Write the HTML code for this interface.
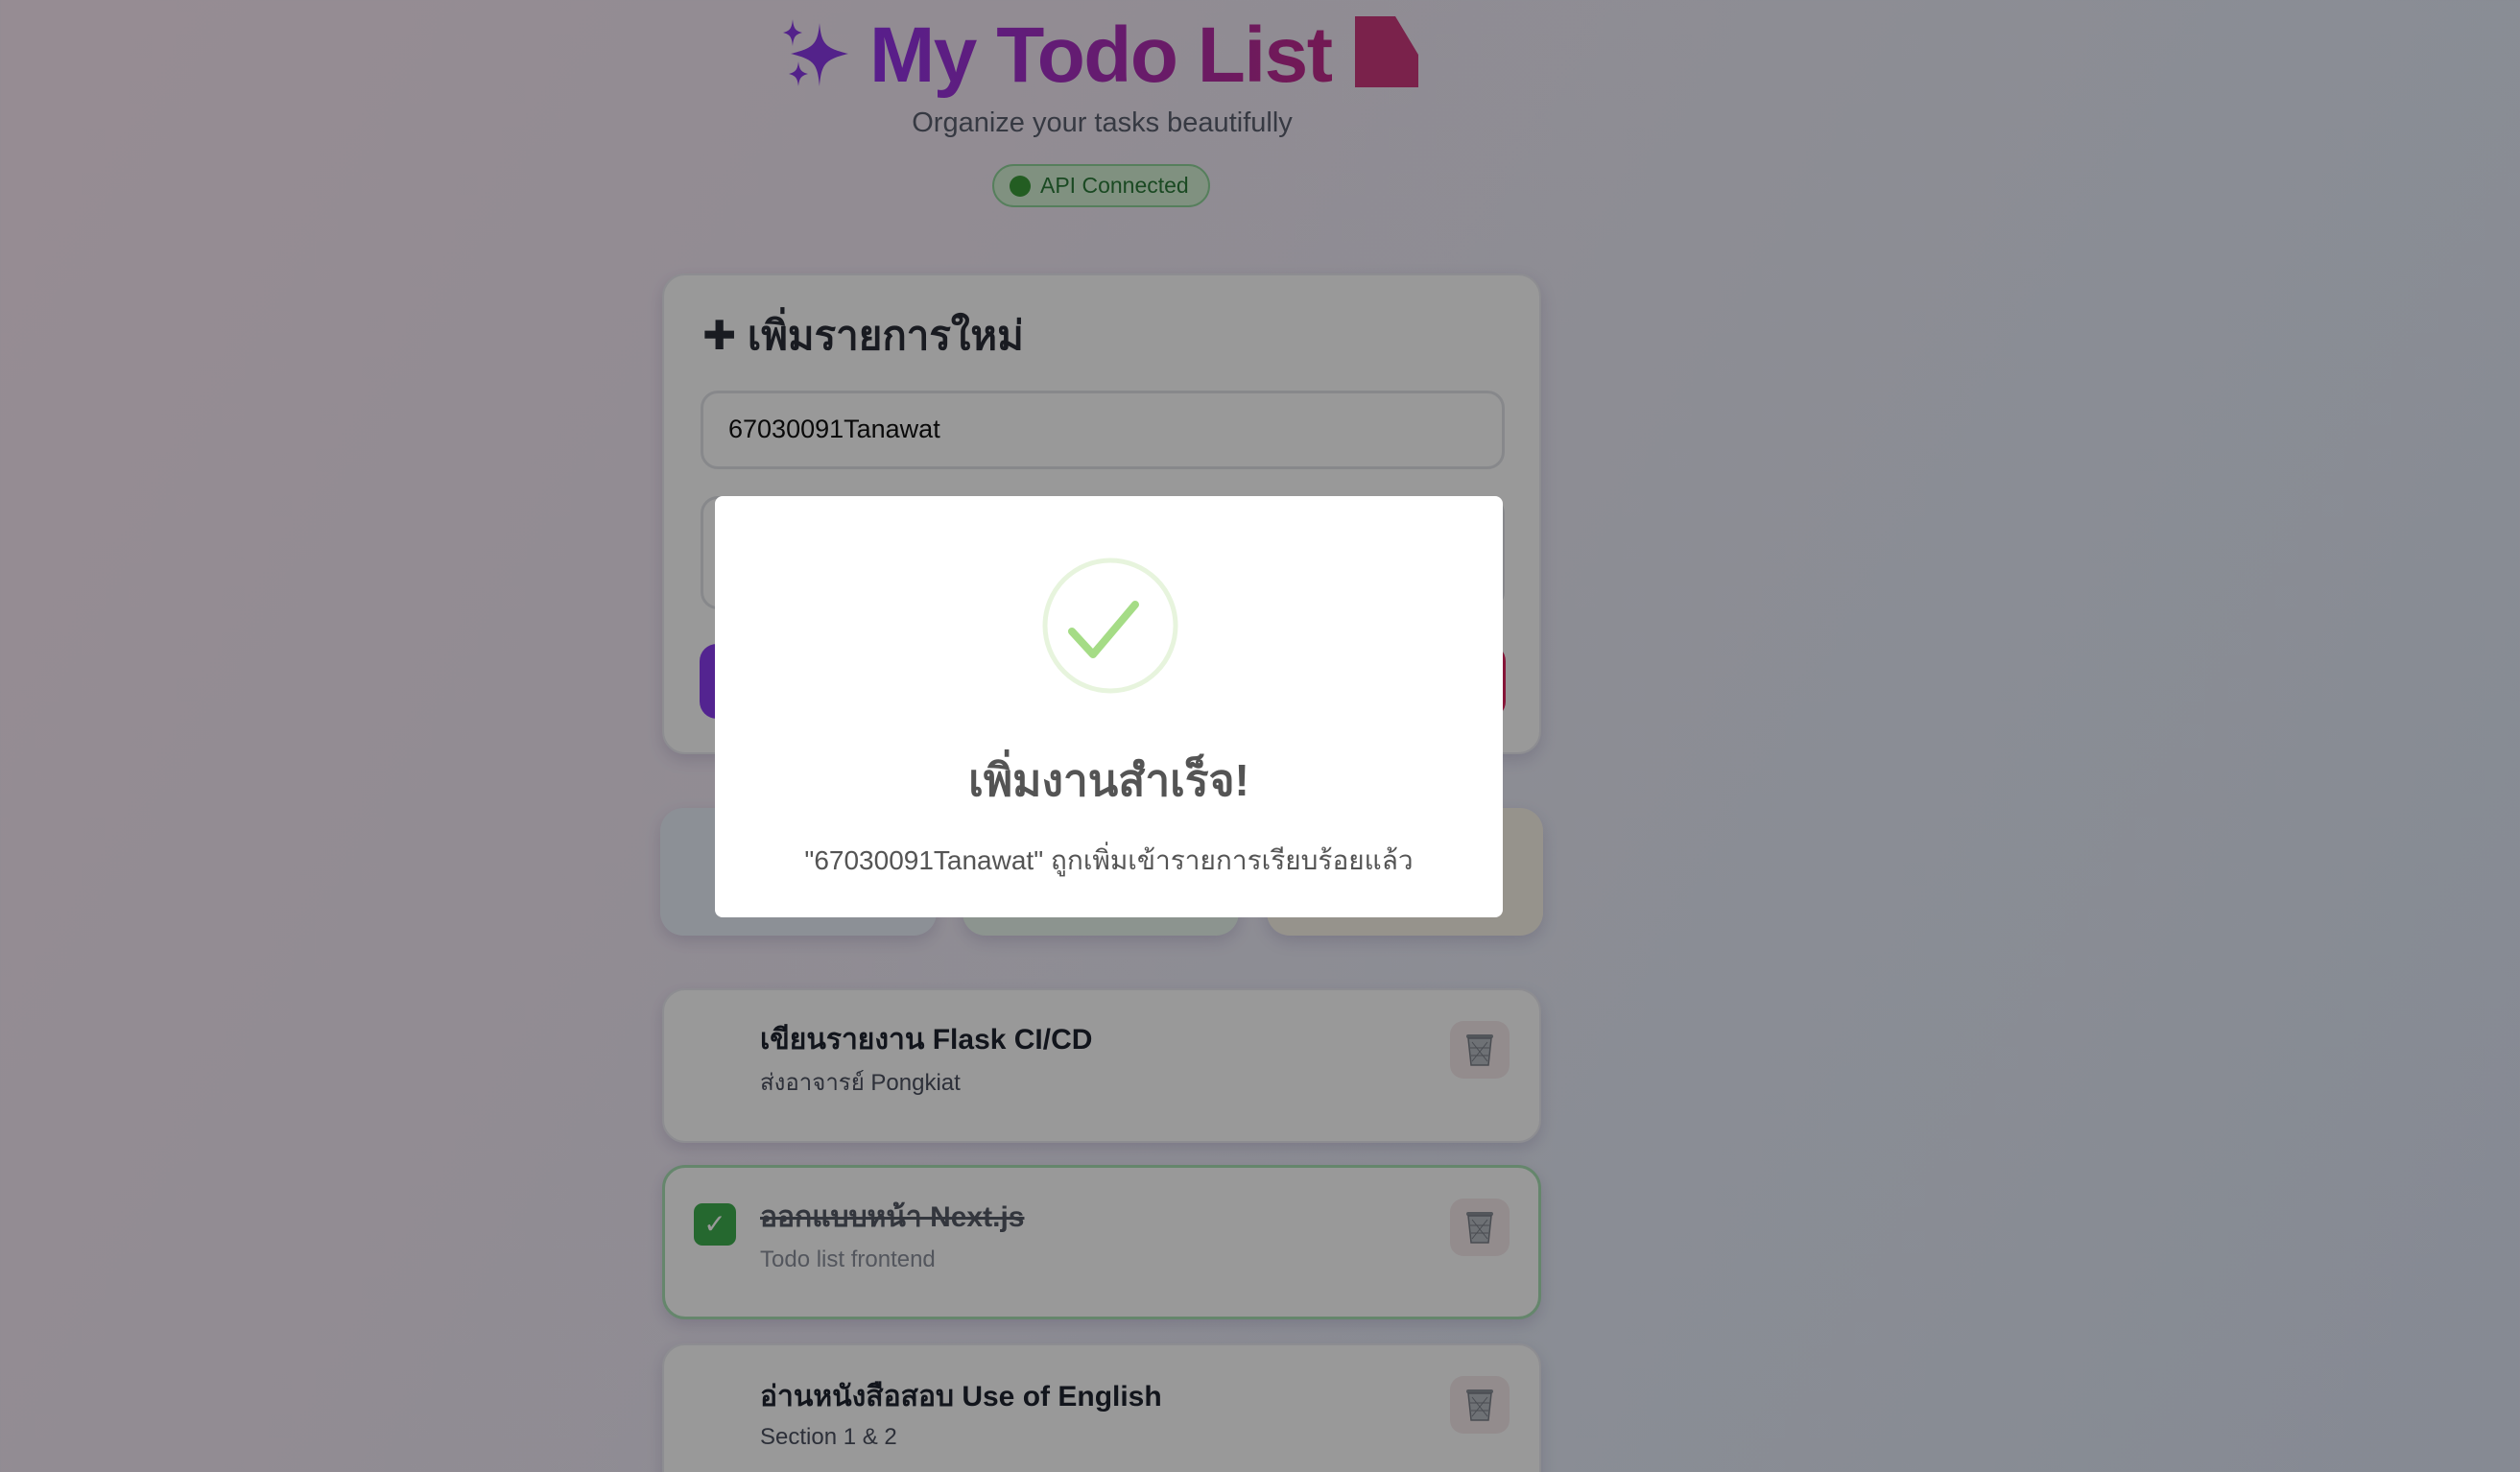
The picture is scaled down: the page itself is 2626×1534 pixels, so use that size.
<!DOCTYPE html>
<html><head><meta charset="utf-8">
<style>
*{box-sizing:border-box;margin:0;padding:0}
html,body{width:2626px;height:1534px;overflow:hidden}
body{position:relative;font-family:"Liberation Sans","DejaVu Sans",sans-serif;background:linear-gradient(120deg,#fbeaf6 0%,#f2eaf6 35%,#e6ecf8 70%,#dfe6f6 100%)}
.abs{position:absolute}
.title{left:906px;top:8px;font-size:82px;font-weight:bold;letter-spacing:-1.5px;background:linear-gradient(90deg,#9333ea,#c02a8a);-webkit-background-clip:text;color:transparent;line-height:100px;white-space:nowrap}
.sub{left:0;width:2297px;text-align:center;top:112px;font-size:29px;color:#5a5f6e}
.badge{left:1034px;top:171px;width:227px;height:45px;border-radius:23px;background:#d6f2d6;border:2px solid #8fd49a;color:#2c7a3a;font-size:23px;line-height:41px;padding-left:48px}
.badge:before{content:"";position:absolute;left:16px;top:10px;width:22px;height:22px;border-radius:50%;background:#3b9b3a}
.card{background:#ffffff;border-radius:24px;box-shadow:0 6px 16px rgba(80,60,120,.18)}
.overlay{left:0;top:0;width:2626px;height:1534px;background:rgba(0,0,0,.4)}
.modal{left:745px;top:517px;width:821px;height:439px;background:#fff;border-radius:8px}
.trash{width:62px;height:60px;border-radius:14px;background:#f6eaec}
.trash svg{position:absolute;left:16px;top:12px}
.ti{font-size:30px;font-weight:bold;color:#1f2330}
.ts{font-size:24px;color:#4b5060}
</style></head><body>
<svg class="abs" style="left:814px;top:18px" width="72" height="74" viewBox="0 0 72 74">
<path d="M40 6 C42 28 46 32 70 38 C46 44 42 48 40 72 C38 48 34 44 10 38 C34 32 38 28 40 6Z" fill="#8b3ae6"/>
<path d="M12 2 C13 12 15 14 22 16 C15 18 13 20 12 30 C11 20 9 18 2 16 C9 14 11 12 12 2Z" fill="#8b3ae6"/>
<path d="M18 46 C19 55 21 57 28 59 C21 61 19 63 18 72 C17 63 15 61 8 59 C15 57 17 55 18 46Z" fill="#8b3ae6"/>
</svg>
<div class="abs title">My Todo List</div>
<svg class="abs" style="left:1412px;top:17px" width="66" height="74" viewBox="0 0 66 74"><path d="M0 0 H42 L66 40 V74 H0Z" fill="#cc3a7e"/></svg>
<div class="abs sub">Organize your tasks beautifully</div>
<div class="abs badge">API Connected</div>

<div class="abs card" style="left:690px;top:285px;width:916px;height:501px;border:2px solid #ececf2">
 <div class="abs" style="left:40px;top:30px;font-size:42px;font-weight:bold;color:#2a2d38">✚ เพิ่มรายการใหม่</div>
 <div class="abs" style="left:38px;top:120px;width:838px;height:82px;border:3px solid #e1e3e8;border-radius:18px;font-size:27px;color:#111;padding:22px 0 0 26px;background:#fff">67030091Tanawat</div>
 <div class="abs" style="left:38px;top:230px;width:838px;height:118px;border:3px solid #e1e3e8;border-radius:18px;background:#fff"></div>
 <div class="abs" style="left:37px;top:384px;width:400px;height:78px;border-radius:18px;background:#8a3cf0"></div>
 <div class="abs" style="left:475px;top:384px;width:402px;height:78px;border-radius:18px;background:#e0245e"></div>
</div>

<div class="abs card" style="left:688px;top:842px;width:288px;height:133px;background:#eaf0fb"></div>
<div class="abs card" style="left:1003px;top:842px;width:288px;height:133px;background:#eaf7ee"></div>
<div class="abs card" style="left:1320px;top:842px;width:288px;height:133px;background:#fbf5ea"></div>

<div class="abs card" style="left:690px;top:1030px;width:916px;height:161px;border:2px solid #ececf2">
 <div class="abs ti" style="left:100px;top:28px">เขียนรายงาน Flask CI/CD</div>
 <div class="abs ts" style="left:100px;top:76px">ส่งอาจารย์ Pongkiat</div>
 <div class="abs trash" style="left:819px;top:32px"><svg width="30" height="36" viewBox="0 0 30 36"><rect x="1" y="2" width="28" height="4" rx="2" fill="#8a8f98"/><path d="M3 6 L6 34 H24 L27 6Z" fill="#b8bcc4" stroke="#7a7f88" stroke-width="1.5"/><path d="M7 10 L23 30 M23 10 L7 30 M5 16 H25 M6 24 H24" stroke="#7a7f88" stroke-width="1"/></svg></div>
</div>
<div class="abs card" style="left:690px;top:1214px;width:916px;height:161px;border:3px solid #a8e0b4">
 <div class="abs" style="left:30px;top:37px;width:44px;height:44px;border-radius:9px;background:#3fae4f;color:#fff;font-size:28px;text-align:center;line-height:44px">✓</div>
 <div class="abs ti" style="left:99px;top:28px;color:#555a66;text-decoration:line-through">ออกแบบหน้า Next.js</div>
 <div class="abs ts" style="left:99px;top:82px;color:#8a8f9c">Todo list frontend</div>
 <div class="abs trash" style="left:818px;top:32px"><svg width="30" height="36" viewBox="0 0 30 36"><rect x="1" y="2" width="28" height="4" rx="2" fill="#8a8f98"/><path d="M3 6 L6 34 H24 L27 6Z" fill="#b8bcc4" stroke="#7a7f88" stroke-width="1.5"/><path d="M7 10 L23 30 M23 10 L7 30 M5 16 H25 M6 24 H24" stroke="#7a7f88" stroke-width="1"/></svg></div>
</div>
<div class="abs card" style="left:690px;top:1400px;width:916px;height:200px;border:2px solid #ececf2">
 <div class="abs ti" style="left:100px;top:30px">อ่านหนังสือสอบ Use of English</div>
 <div class="abs ts" style="left:100px;top:82px">Section 1 &amp; 2</div>
 <div class="abs trash" style="left:819px;top:32px"><svg width="30" height="36" viewBox="0 0 30 36"><rect x="1" y="2" width="28" height="4" rx="2" fill="#8a8f98"/><path d="M3 6 L6 34 H24 L27 6Z" fill="#b8bcc4" stroke="#7a7f88" stroke-width="1.5"/><path d="M7 10 L23 30 M23 10 L7 30 M5 16 H25 M6 24 H24" stroke="#7a7f88" stroke-width="1"/></svg></div>
</div>

<div class="abs overlay"></div>
<div class="abs modal">
 <svg class="abs" style="left:339px;top:62px" width="146" height="146" viewBox="0 0 146 146">
  <circle cx="73" cy="73" r="68" fill="none" stroke="#e7f4dd" stroke-width="5"/>
  <path d="M33 79 L55 103 L99 51" fill="none" stroke="#a5dc86" stroke-width="8" stroke-linecap="round" stroke-linejoin="round"/>
 </svg>
 <div class="abs" style="left:0;width:821px;top:260px;text-align:center;font-size:46px;font-weight:bold;color:#545454">เพิ่มงานสำเร็จ!</div>
 <div class="abs" style="left:0;width:821px;top:358px;text-align:center;font-size:28px;color:#545454">"67030091Tanawat" ถูกเพิ่มเข้ารายการเรียบร้อยแล้ว</div>
</div>
</body></html>
